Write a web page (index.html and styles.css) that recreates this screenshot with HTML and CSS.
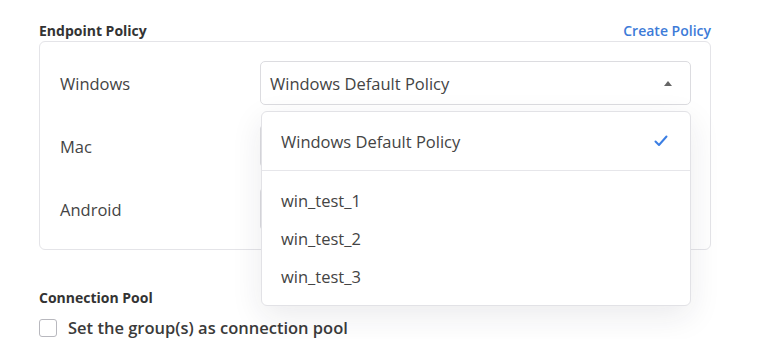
FILE: index.html
```html
<!DOCTYPE html>
<html lang="en">
<head>
  <meta charset="UTF-8">
  <title>Endpoint Policy</title>
  <link rel="stylesheet" href="styles.css">
</head>
<body>
  <div class="panel">
    <div class="section-head">
      <span class="section-title">Endpoint Policy</span>
      <a class="link">Create Policy</a>
    </div>
    <div class="card">
      <div class="row">
        <span class="row-label">Windows</span>
        <div class="select-wrap">
          <div class="select is-open">
            <span>Windows Default Policy</span>
            <span class="caret"></span>
          </div>
          <!-- menu opened from the windows select -->
          <div class="menu">
            <div class="menu-group">
              <div class="menu-item is-selected">
                <span>Windows Default Policy</span>
                <svg class="check" width="14" height="12" viewBox="0 0 14 12">
                  <path d="M1.5 6.5 L5 10 L12.5 1.5" fill="none" stroke="#3b7ee3" stroke-width="2" stroke-linecap="round" stroke-linejoin="round"/>
                </svg>
              </div>
            </div>
            <div class="menu-group">
              <div class="menu-item">win_test_1</div>
              <div class="menu-item">win_test_2</div>
              <div class="menu-item">win_test_3</div>
            </div>
          </div>
        </div>
      </div>
      <div class="row">
        <span class="row-label">Mac</span>
        <div class="select"><span class="caret down"></span></div>
      </div>
      <div class="row">
        <span class="row-label">Android</span>
        <div class="select"><span class="caret down"></span></div>
      </div>
    </div>

    <div class="section-head pool-head">
      <span class="section-title">Connection Pool</span>
    </div>
    <label class="checkbox">
      <span class="box"></span>
      <span>Set the group(s) as connection pool</span>
    </label>
  </div>
</body>
</html>
```

FILE: styles.css
```css
html, body { margin: 0; padding: 0; }
body {
  background: #ffffff;
  color: #444444;
  font-family: "Open Sans", "Noto Sans", sans-serif;
}

.panel { width: 672px; padding: 21px 0 0 39px; }

.section-head {
  display: flex;
  justify-content: space-between;
  align-items: baseline;
  height: 20px;
}
.section-title { font-size: 14px; font-weight: 700; color: #333333; }
.link { font-size: 14px; font-weight: 600; color: #3d7bd8; cursor: pointer; }

.card {
  border: 1px solid #e4e4e8;
  border-radius: 6px;
  padding: 19px 19px 18px 20px;
  display: flex;
  flex-direction: column;
  gap: 19px;
}

.row { display: flex; align-items: center; height: 44px; }
.row-label { width: 200px; font-size: 16.5px; color: #444444; }

.select-wrap { position: relative; flex: 1; display: flex; }
.select {
  flex: 1;
  height: 44px;
  box-sizing: border-box;
  border: 1px solid #dcdce0;
  border-radius: 5px;
  padding: 0 16px 0 9px;
  display: flex;
  align-items: center;
  justify-content: space-between;
  font-size: 16.5px;
  color: #444444;
}
.caret {
  width: 0;
  height: 0;
  border-left: 4.5px solid transparent;
  border-right: 4.5px solid transparent;
  border-bottom: 5px solid #666666;
  margin-right: 2px;
  margin-left: auto;
}
.caret.down { border-bottom: 0; border-top: 5px solid #666666; }

.menu {
  position: absolute;
  top: 50px;
  left: 1px;
  right: 0;
  background: #ffffff;
  border: 1px solid #e2e2e6;
  border-radius: 6px;
  box-shadow: 0 10px 32px rgba(30, 30, 60, 0.09);
  z-index: 2;
}
.menu-group { padding: 10px 0; }
.menu-group + .menu-group { border-top: 1px solid #e6e6ea; }
.menu-item {
  height: 38px;
  padding: 0 22px 0 19px;
  display: flex;
  align-items: center;
  justify-content: space-between;
  font-size: 16.5px;
  color: #444444;
}
.check { display: block; }

.pool-head { margin-top: 38px; }
.checkbox {
  display: flex;
  align-items: center;
  gap: 11px;
  margin-top: 8px;
  font-size: 16.5px;
  font-weight: 600;
  color: #3a3a3a;
}
.box {
  width: 16px;
  height: 16px;
  border: 1px solid #b8b8be;
  border-radius: 3px;
  background: #ffffff;
}
```
